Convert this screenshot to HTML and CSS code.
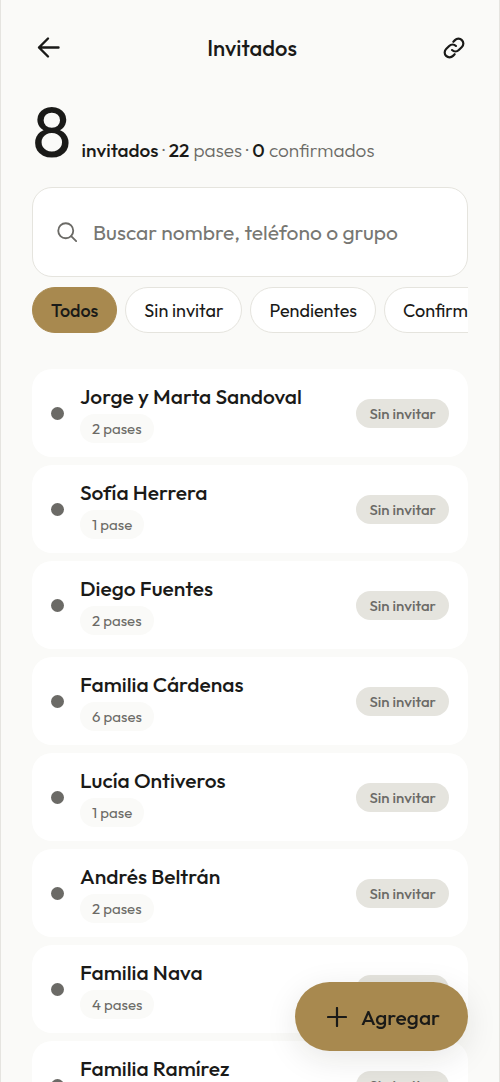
FILE: index.html
```html
<!DOCTYPE html>
<html lang="es">
<head>
<meta charset="utf-8">
<meta name="viewport" content="width=device-width, initial-scale=1">
<title>Invitados</title>
<link rel="stylesheet" href="styles.css">
</head>
<body>
<div class="app">
  <header class="topbar">
    <button class="icon-button" type="button" aria-label="Volver">
      <svg class="icon icon-back" viewBox="0 0 24 24" aria-hidden="true"><path d="M22.5 11.5H3M12 2.5l-9 9 9 9"/></svg>
    </button>
    <h1 class="title">Invitados</h1>
    <button class="icon-button icon-button-end" type="button" aria-label="Copiar enlace">
      <svg class="icon icon-link" viewBox="0 0 256 256" aria-hidden="true"><path d="m122 71 15-15a44 44 0 0 1 63 0 44 44 0 0 1 0 63l-28 28a44 44 0 0 1-62 0M134 185l-15 15a44 44 0 0 1-63 0 44 44 0 0 1 0-63l28-28a44 44 0 0 1 62 0"/></svg>
    </button>
  </header>
  <main class="content">
    <p class="summary"><span class="total">8</span><span class="totals"><b>invitados</b> · <b>22</b> pases · <b>0</b> confirmados</span></p>
    <label class="search">
      <svg class="icon icon-search" viewBox="0 0 24 24" aria-hidden="true"><circle cx="10.5" cy="10.5" r="9"/><path d="m17 17 6 6"/></svg>
      <input class="search-input" type="search" aria-label="Buscar invitados" placeholder="Buscar nombre, teléfono o grupo">
    </label>
    <div class="filters">
      <button class="chip chip-active" type="button">Todos</button>
      <button class="chip" type="button">Sin invitar</button>
      <button class="chip" type="button">Pendientes</button>
      <button class="chip" type="button">Confirmados</button>
    </div>
    <ul class="guests">
      <li class="guest"><span class="dot"></span><div class="info"><h2 class="name">Jorge y Marta Sandoval</h2><span class="passes">2 pases</span></div><span class="status">Sin invitar</span></li>
      <li class="guest"><span class="dot"></span><div class="info"><h2 class="name">Sofía Herrera</h2><span class="passes">1 pase</span></div><span class="status">Sin invitar</span></li>
      <li class="guest"><span class="dot"></span><div class="info"><h2 class="name">Diego Fuentes</h2><span class="passes">2 pases</span></div><span class="status">Sin invitar</span></li>
      <li class="guest"><span class="dot"></span><div class="info"><h2 class="name">Familia Cárdenas</h2><span class="passes">6 pases</span></div><span class="status">Sin invitar</span></li>
      <li class="guest"><span class="dot"></span><div class="info"><h2 class="name">Lucía Ontiveros</h2><span class="passes">1 pase</span></div><span class="status">Sin invitar</span></li>
      <li class="guest"><span class="dot"></span><div class="info"><h2 class="name">Andrés Beltrán</h2><span class="passes">2 pases</span></div><span class="status">Sin invitar</span></li>
      <li class="guest"><span class="dot"></span><div class="info"><h2 class="name">Familia Nava</h2><span class="passes">4 pases</span></div><span class="status">Sin invitar</span></li>
      <li class="guest"><span class="dot"></span><div class="info"><h2 class="name">Familia Ramírez</h2><span class="passes">4 pases</span></div><span class="status">Sin invitar</span></li>
    </ul>
  </main>
  <button class="add" type="button">
    <svg class="icon icon-plus" viewBox="0 0 20 20" aria-hidden="true"><path d="M10 1v18M1 10h18"/></svg>
    Agregar
  </button>
</div>
</body>
</html>
```
FILE: styles.css
```css
* {
  box-sizing: border-box;
}

body {
  margin: 0;
  background: #fafaf8;
  color: #1a1a18;
  font-family: Outfit, Lato, "Open Sans", sans-serif;
}

button,
input {
  font: inherit;
  color: inherit;
}

button {
  cursor: pointer;
}

.app {
  height: 100vh;
  overflow: hidden;
  border: solid #e5e4e0;
  border-width: 0 1px;
}

.icon {
  display: block;
  flex: none;
  fill: none;
  stroke: currentColor;
  stroke-linecap: round;
  stroke-linejoin: round;
}

.topbar {
  display: flex;
  align-items: center;
  justify-content: space-between;
  padding: 24px 31px 0;
}

.icon-button {
  display: flex;
  padding: 12px 4px;
  border: 0;
  background: none;
}

.icon-button-end {
  padding: 10px 0;
}

.icon-back {
  width: 24px;
  height: 24px;
  stroke-width: 2.4;
}

.icon-link {
  width: 28px;
  height: 28px;
  stroke-width: 20;
}

.title {
  margin: 0;
  font-size: 22px;
  line-height: 28px;
  font-weight: 500;
}

.content {
  padding: 22px 31px;
}

.summary {
  display: flex;
  align-items: baseline;
  gap: 10px;
  margin: 0 0 20px;
}

.total {
  font-size: 72px;
  line-height: 73px;
}

.totals {
  color: #6b6a66;
  font-size: 19px;
  line-height: 24px;
  font-weight: 300;
}

.totals b {
  color: #1a1a18;
  font-weight: 500;
}

.search {
  display: flex;
  align-items: center;
  gap: 16px;
  height: 90px;
  padding: 0 24px;
  border: 1px solid #e5e4de;
  border-radius: 20px;
  background: #fff;
}

.icon-search {
  width: 20px;
  height: 20px;
  color: #6b6a66;
  stroke-width: 2.2;
}

.search-input {
  flex: 1;
  min-width: 0;
  padding: 0;
  border: 0;
  outline: 0;
  background: none;
  font-size: 21px;
}

.search-input::placeholder {
  color: #777773;
  opacity: 1;
}

.filters {
  display: flex;
  gap: 8px;
  margin: 10px 0 36px;
  overflow: hidden;
}

.chip {
  flex: none;
  height: 46px;
  padding: 0 18px;
  border: 1px solid #e5e4de;
  border-radius: 23px;
  background: #fff;
  font-size: 18px;
}

.chip-active {
  border-color: #a8894f;
  background: #a8894f;
  font-weight: 500;
}

.guests {
  display: grid;
  gap: 8px;
  margin: 0;
  padding: 0;
  list-style: none;
}

.guest {
  display: flex;
  align-items: center;
  gap: 16px;
  padding: 14px 19px;
  border-radius: 20px;
  background: #fff;
}

.dot {
  width: 13px;
  height: 13px;
  border-radius: 50%;
  background: #6b6a66;
}

.info {
  flex: 1;
}

.name {
  margin: 0 0 4px;
  font-size: 21px;
  line-height: 27px;
  font-weight: 500;
}

.passes,
.status {
  display: block;
  width: fit-content;
  border-radius: 15px;
  color: #6b6a66;
  font-size: 15px;
  line-height: 29px;
}

.passes {
  padding: 0 12px;
  background: #fafaf8;
}

.status {
  padding: 0 13px;
  background: #e5e4de;
  font-weight: 500;
}

.add {
  position: fixed;
  right: 32px;
  bottom: 31px;
  display: flex;
  align-items: center;
  gap: 14px;
  height: 69px;
  padding: 0 28px 0 32px;
  border: 0;
  border-radius: 35px;
  background: #a8894f;
  box-shadow: 0 8px 32px rgb(26 26 24 / 10%);
  font-size: 21px;
  font-weight: 500;
}

.icon-plus {
  width: 20px;
  height: 20px;
  stroke-width: 2.2;
}
```
